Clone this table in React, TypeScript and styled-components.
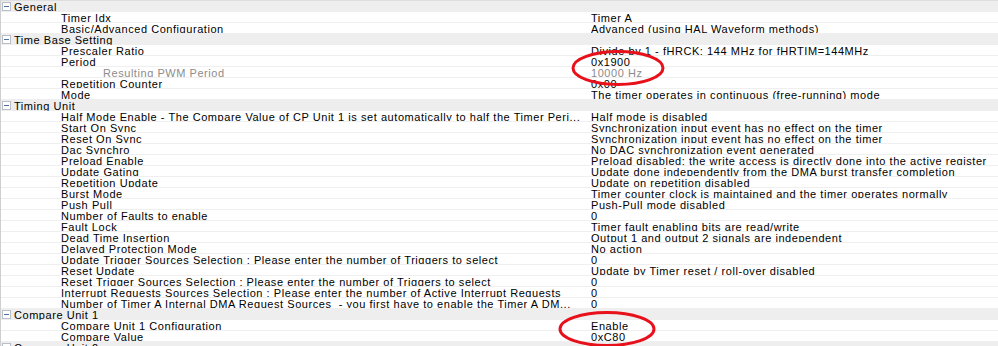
import React, { FC } from 'react';
import styled, { createGlobalStyle } from 'styled-components';

const GlobalStyle = createGlobalStyle`
  html, body {
    margin: 0;
    padding: 0;
    background: #ffffff;
    overflow: hidden;
  }
`;

interface Item {
  label: string;
  value: string;
  sub?: boolean;
}

interface Group {
  title: string;
  items: Item[];
}

const groups: Group[] = [
  {
    title: 'General',
    items: [
      { label: 'Timer Idx', value: 'Timer A' },
      { label: 'Basic/Advanced Configuration', value: 'Advanced (using HAL Waveform methods)' }
    ]
  },
  {
    title: 'Time Base Setting',
    items: [
      { label: 'Prescaler Ratio', value: 'Divide by 1 - fHRCK: 144 MHz for fHRTIM=144MHz' },
      { label: 'Period', value: '0x1900' },
      { label: 'Resulting PWM Period', value: '10000 Hz', sub: true },
      { label: 'Repetition Counter', value: '0x00' },
      { label: 'Mode', value: 'The timer operates in continuous (free-running) mode' }
    ]
  },
  {
    title: 'Timing Unit',
    items: [
      {
        label:
          'Half Mode Enable - The Compare Value of CP Unit 1 is set automatically to half the Timer Peri...',
        value: 'Half mode is disabled'
      },
      { label: 'Start On Sync', value: 'Synchronization input event has no effect on the timer' },
      { label: 'Reset On Sync', value: 'Synchronization input event has no effect on the timer' },
      { label: 'Dac Synchro', value: 'No DAC synchronization event generated' },
      {
        label: 'Preload Enable',
        value: 'Preload disabled: the write access is directly done into the active register'
      },
      {
        label: 'Update Gating',
        value: 'Update done independently from the DMA burst transfer completion'
      },
      { label: 'Repetition Update', value: 'Update on repetition disabled' },
      {
        label: 'Burst Mode',
        value: 'Timer counter clock is maintained and the timer operates normally'
      },
      { label: 'Push Pull', value: 'Push-Pull mode disabled' },
      { label: 'Number of Faults to enable', value: '0' },
      { label: 'Fault Lock', value: 'Timer fault enabling bits are read/write' },
      { label: 'Dead Time Insertion', value: 'Output 1 and output 2 signals are independent' },
      { label: 'Delayed Protection Mode', value: 'No action' },
      {
        label: 'Update Trigger Sources Selection : Please enter the number of Triggers to select',
        value: '0'
      },
      { label: 'Reset Update', value: 'Update by Timer reset / roll-over disabled' },
      {
        label: 'Reset Trigger Sources Selection : Please enter the number of Triggers to select',
        value: '0'
      },
      {
        label:
          'Interrupt Requests Sources Selection : Please enter the number of Active Interrupt Requests',
        value: '0'
      },
      {
        label:
          'Number of Timer A Internal DMA Request Sources  - you first have to enable the Timer A DM...',
        value: '0'
      }
    ]
  },
  {
    title: 'Compare Unit 1',
    items: [
      { label: 'Compare Unit 1 Configuration', value: 'Enable' },
      { label: 'Compare Value', value: '0xC80' }
    ]
  },
  {
    title: 'Compare Unit 2',
    items: []
  }
];

const Page = styled.div`
  position: relative;
  width: 998px;
  height: 346px;
  overflow: hidden;
  box-sizing: border-box;
  border-left: 1px solid #cfcfcf;
  border-top: 1px solid #dedede;
  font-family: 'Liberation Sans', Arial, sans-serif;
  font-size: 11px;
  letter-spacing: 0.55px;
  color: #000000;
`;

const HeaderRow = styled.div`
  display: flex;
  align-items: flex-start;
  height: 11px;
  box-sizing: border-box;
  background: #eeeeee;
  overflow: hidden;
  line-height: 12px;
  white-space: nowrap;
`;

const Expander = styled.span`
  position: relative;
  flex: none;
  width: 9px;
  height: 9px;
  margin: 1px 3px 0 1px;
  box-sizing: border-box;
  border: 1px solid #b8bfc8;
  background: #ffffff;

  &::after {
    content: '';
    position: absolute;
    left: 1px;
    right: 1px;
    top: 3px;
    height: 1px;
    background: #4d6fa8;
  }
`;

const Row = styled.div`
  display: grid;
  grid-template-columns: 590px 1fr;
  height: 11px;
  box-sizing: border-box;
  border-bottom: 1px solid #efefef;
  overflow: hidden;
  line-height: 12px;
  white-space: pre;
`;

const Label = styled.div<{ $sub?: boolean }>`
  padding-left: ${(p) => (p.$sub ? '102px' : '60px')};
  padding-right: 4px;
  overflow: hidden;
  color: ${(p) => (p.$sub ? '#8c8c8c' : '#000000')};
`;

const Value = styled.div<{ $sub?: boolean }>`
  overflow: hidden;
  color: ${(p) => (p.$sub ? '#8c8c8c' : '#000000')};
`;

const Marks = styled.svg`
  position: absolute;
  left: 0;
  top: 0;
  pointer-events: none;
`;

const Section: FC<{ group: Group }> = ({ group }) => (
  <>
    <HeaderRow>
      <Expander />
      {group.title}
    </HeaderRow>
    {group.items.map((item, i) => (
      <Row key={i}>
        <Label $sub={item.sub}>{item.label}</Label>
        <Value $sub={item.sub}>{item.value}</Value>
      </Row>
    ))}
  </>
);

export default function App() {
  return (
    <>
      <GlobalStyle />
      <Page>
        {groups.map((g) => (
          <Section key={g.title} group={g} />
        ))}
        <Marks width="998" height="346" viewBox="0 0 998 346">
          <ellipse cx="617" cy="67" rx="45" ry="16.5" fill="none" stroke="#e8101a" strokeWidth="3" />
          <ellipse cx="606" cy="328" rx="47" ry="16.5" fill="none" stroke="#e8101a" strokeWidth="3" />
        </Marks>
      </Page>
    </>
  );
}
